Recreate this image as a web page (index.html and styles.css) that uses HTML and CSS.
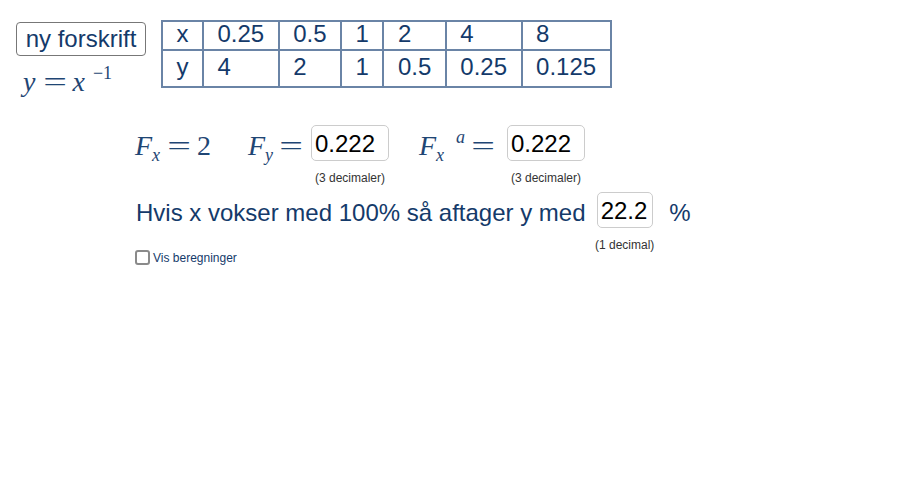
FILE: index.html
```html
<!DOCTYPE html>
<html lang="da">
<head>
<meta charset="utf-8">
<title>Forskrift</title>
<link rel="stylesheet" href="styles.css">
</head>
<body>
<div class="canvas">
  <div class="top">
    <div class="left">
      <button class="btn">ny forskrift</button>
      <div class="math formula"><i class="v">y</i><span class="eq">=</span><i class="v">x</i><sup class="sup">−1</sup></div>
    </div>
    <table class="values">
      <tr class="r1"><td>x</td><td>0.25</td><td>0.5</td><td>1</td><td>2</td><td>4</td><td>8</td></tr>
      <tr class="r2"><td>y</td><td>4</td><td>2</td><td>1</td><td>0.5</td><td>0.25</td><td>0.125</td></tr>
    </table>
  </div>

  <div class="frow">
    <div class="math m1"><i>F</i><sub class="sub">x</sub><span class="eq">=</span><span class="num">2</span></div>
    <div class="math m2"><i>F</i><sub class="sub">y</sub><span class="eq">=</span></div>
    <div class="field">
      <div class="box">0.222</div>
      <div class="cap">(3 decimaler)</div>
    </div>
    <div class="math m3"><i>F</i><sub class="sub">x</sub><sup class="supa">a</sup><span class="eq">=</span></div>
    <div class="field">
      <div class="box">0.222</div>
      <div class="cap">(3 decimaler)</div>
    </div>
  </div>

  <div class="srow">
    <span class="sentence">Hvis x vokser med 100% så aftager y med</span>
    <div class="field">
      <div class="box narrow">22.2</div>
      <div class="cap">(1 decimal)</div>
    </div>
    <span class="pct">%</span>
  </div>

  <label class="chk"><span class="cb"></span><span class="chk-label">Vis beregninger</span></label>
</div>
</body>
</html>
```

FILE: styles.css
```css
html, body {
  margin: 0;
  padding: 0;
  background: #ffffff;
}
body {
  font-family: "Liberation Sans", Arial, sans-serif;
  color: #143a6a;
}
.canvas {
  width: 900px;
  height: 480px;
  overflow: hidden;
}
.top {
  display: flex;
  align-items: flex-start;
  height: 87px;
  box-sizing: border-box;
  padding-top: 20px;
  padding-left: 16px;
}
.left {
  width: 145px;
  display: flex;
  flex-direction: column;
}
.btn {
  width: 130px;
  height: 34px;
  margin-top: 2px;
  padding: 0;
  border: 1.5px solid #777777;
  border-radius: 4px;
  background: #ffffff;
  font-family: "Liberation Sans", Arial, sans-serif;
  font-size: 24px;
  color: #143a6a;
  line-height: 30px;
}
.math {
  font-family: "Liberation Serif", "Times New Roman", serif;
  font-size: 28px;
  color: #1f4674;
  display: flex;
  align-items: baseline;
  white-space: nowrap;
}
.math i {
  font-style: italic;
}
.eq {
  display: inline-block;
  width: 22px;
  text-align: center;
  transform: scaleX(1.5);
}
.sup {
  font-size: 18px;
  position: relative;
  top: -12px;
  margin-left: 8px;
}
.sub {
  font-size: 18px;
  font-style: italic;
  position: relative;
  top: 6px;
  width: 10px;
}
.supa {
  font-size: 18px;
  font-style: italic;
  position: relative;
  top: -12px;
  margin-left: 10px;
  margin-right: 7px;
}
.formula {
  margin-left: 7px;
  margin-top: 11px;
  line-height: 30px;
}
.formula .eq {
  margin-left: 9px;
  margin-right: 6px;
}
.values {
  border-collapse: collapse;
  font-size: 24px;
  color: #143a6a;
}
.values td {
  border: 2px solid #6a84a6;
  padding: 0 13.5px;
  text-align: left;
  white-space: nowrap;
  line-height: 24px;
  vertical-align: top;
}
.values .r1 td {
  height: 27px;
  padding-top: 0;
}
.values .r2 td {
  height: 31px;
  padding-top: 4px;
}
.frow {
  display: flex;
  align-items: flex-start;
  margin-top: 38px;
  padding-left: 135px;
}
.frow .math {
  height: 36px;
  line-height: 36px;
  padding-top: 3px;
}
.m1 {
  width: 113px;
}
.m1 .eq {
  margin-left: 6px;
  margin-right: 7px;
}
.m2 {
  width: 63px;
}
.m2 .eq {
  margin-left: 5px;
}
.m3 {
  width: 88px;
  margin-left: 30px;
}
.field {
  display: flex;
  flex-direction: column;
  align-items: center;
}
.box {
  width: 73px;
  height: 34px;
  border: 1.5px solid #cccccc;
  border-radius: 5px;
  box-sizing: content-box;
  font-size: 24px;
  color: #000000;
  line-height: 36px;
  padding-left: 3px;
  text-align: left;
}
.box.narrow {
  width: 51px;
}
.cap {
  font-size: 12px;
  color: #333333;
  margin-top: 10px;
  line-height: 14px;
}
.srow {
  display: flex;
  align-items: flex-start;
  margin-top: 7px;
  padding-left: 136px;
}
.sentence {
  font-size: 24px;
  line-height: 36px;
  margin-top: 3px;
  width: 459px;
  white-space: nowrap;
}
.pct {
  font-size: 24px;
  line-height: 36px;
  margin-top: 3px;
  margin-left: 15px;
}
.chk {
  display: flex;
  align-items: center;
  margin-left: 135px;
  margin-top: -2px;
  font-size: 12px;
  color: #143a6a;
}
.cb {
  width: 11px;
  height: 11px;
  border: 2px solid #8a8a8a;
  border-radius: 3px;
  margin-right: 3px;
}
```
